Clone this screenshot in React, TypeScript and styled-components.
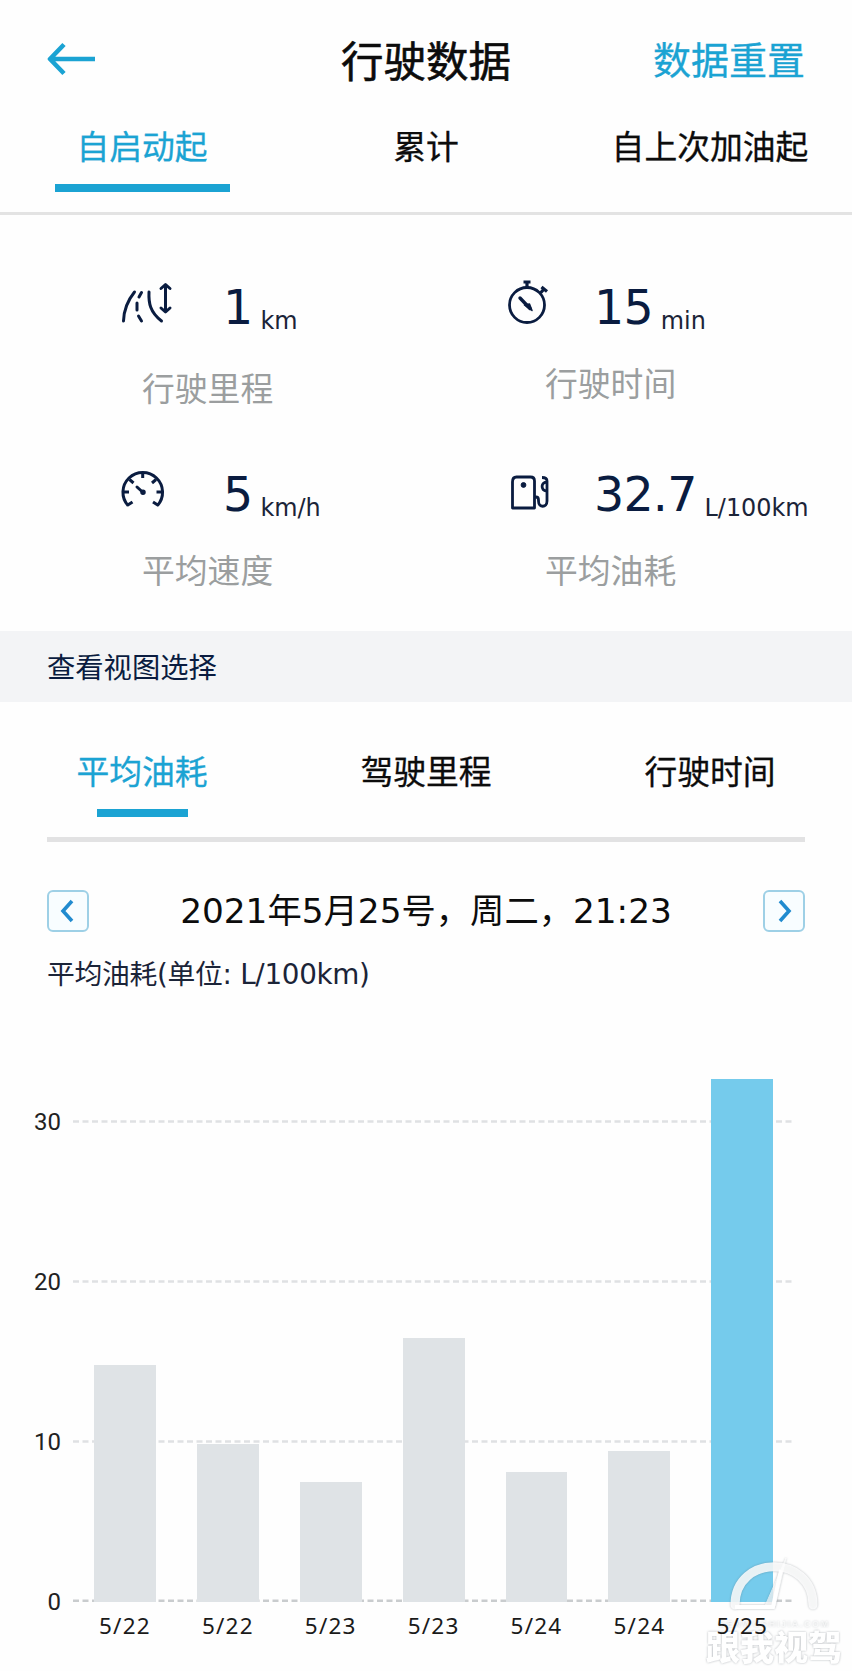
import React from 'react';
import styled, { createGlobalStyle } from 'styled-components';

const BLUE = '#1ba3d3';
const NAVY = '#0a1c40';
const WIDE = '"DejaVu Sans", "Noto Sans CJK SC", sans-serif';

const Global = createGlobalStyle`
  * { box-sizing: border-box; }
  body {
    margin: 0;
    background: #fefefe;
    font-family: "Noto Sans", "Noto Sans CJK SC", sans-serif;
    color: #0c0c0c;
  }
  button { font: inherit; color: inherit; background: none; border: 0; padding: 0; }
`;

const Screen = styled.main`
  position: relative;
  width: 852px;
  height: 1671px;
  overflow: hidden;
  display: flex;
  flex-direction: column;
`;

const Header = styled.header`
  height: 121px;
  padding: 0 47px;
  display: grid;
  grid-template-columns: 1fr auto 1fr;
  align-items: center;
`;

const BackButton = styled.button`
  display: flex;
  justify-self: start;
  margin-top: -3px;
`;

const Title = styled.h1`
  margin: 0;
  font-size: 42.5px;
  line-height: 50px;
  font-weight: 400;
  -webkit-text-stroke: 0.6px currentColor;
`;

const ResetButton = styled.button`
  justify-self: end;
  && { color: ${BLUE}; font-size: 38px; }
  line-height: 48px;
  margin-top: -3px;
  -webkit-text-stroke: 0.3px currentColor;
`;

const Tabs = styled.nav<{ $height: number }>`
  height: ${p => p.$height}px;
  display: grid;
  grid-template-columns: repeat(3, 284px);
`;

const PeriodTabs = styled(Tabs)`
  padding-top: 1px;
  border-bottom: 3px solid #e3e3e3;
`;

const Tab = styled.button<{ $active?: boolean; $bar: number; $gap: number }>`
  display: flex;
  flex-direction: column;
  align-items: center;
  && { font-size: 32.8px; color: ${p => (p.$active ? BLUE : '#0c0c0c')}; }
  line-height: 50px;
  white-space: nowrap;
  -webkit-text-stroke: 0.3px currentColor;
  &::after {
    content: "";
    width: ${p => p.$bar}px;
    height: 8px;
    margin-top: ${p => p.$gap}px;
    background: ${p => (p.$active ? BLUE : 'transparent')};
  }
`;

const Stats = styled.section`
  height: 416px;
  padding: 63px 0 0 119px;
  display: grid;
  grid-template-columns: 388px 1fr;
  grid-template-rows: 187px 187px;
`;

const Stat = styled.div`
  display: flex;
  flex-direction: column;
`;

const Reading = styled.div`
  display: grid;
  grid-template-columns: 87px 1fr;
  height: 68px;
`;

const Figure = styled.div`
  display: flex;
  align-items: baseline;
  color: ${NAVY};
  white-space: nowrap;
  font-family: ${WIDE};
`;

const Value = styled.span<{ $indent: number }>`
  padding-left: ${p => p.$indent}px;
  font-size: 47.5px;
  line-height: 60px;
  letter-spacing: -0.8px;
`;

const Unit = styled.span`
  margin-left: 8px;
  position: relative;
  top: 5px;
  font-size: 23.9px;
  color: #1b2438;
`;

const Caption = styled.div<{ $top: number; $left: number }>`
  margin: ${p => p.$top}px 0 0 ${p => p.$left}px;
  font-size: 32.8px;
  line-height: 48px;
  color: #9b9e9f;
`;

const SectionBar = styled.h2`
  margin: 0;
  height: 71px;
  padding: 1px 0 0 47px;
  background: #f3f4f6;
  color: ${NAVY};
  font-size: 28.3px;
  font-weight: 400;
  line-height: 71px;
`;

const MetricTabs = styled(Tabs)`
  padding-top: 45px;
`;

const Rule = styled.hr`
  width: 758px;
  height: 5px;
  margin: 0 47px;
  border: 0;
  background: #e2e2e3;
`;

const DateRow = styled.div`
  height: 42px;
  margin: 48px 47px 0;
  display: flex;
  justify-content: space-between;
  align-items: center;
`;

const StepButton = styled.button`
  && { border: 2px solid #9ed0e6; background: #f8fdff; }
  width: 42px;
  height: 42px;
  border-radius: 6px;
  display: flex;
  align-items: center;
  justify-content: center;
`;

const DateText = styled.div`
  font-family: ${WIDE};
  font-size: 34.3px;
  line-height: 42px;
  white-space: nowrap;
`;

const ChartTitle = styled.h3`
  margin: 22px 0 0 47px;
  height: 40px;
  font-family: ${WIDE};
  font-size: 27.8px;
  line-height: 42px;
  letter-spacing: -0.3px;
  font-weight: 400;
  color: #1b2438;
`;

const Chart = styled.section`
  margin-top: 84px;
  display: grid;
  grid-template-columns: 61px 721px;
  column-gap: 12px;
`;

const Axis = styled.div`
  height: 524px;
  display: flex;
  flex-direction: column;
  justify-content: flex-end;
  margin-bottom: -15px;
`;

const Tick = styled.span`
  height: 160px;
  flex: none;
  display: flex;
  align-items: flex-end;
  justify-content: flex-end;
  font: 24px/30px Roboto, sans-serif;
  color: #222;
  &:first-child { height: 30px; }
  &:last-child { margin-bottom: -15px; }
`;

const Plot = styled.div`
  display: grid;
  height: 524px;
`;

const Grid = styled.svg`
  grid-area: 1 / 1;
  display: block;
`;

const Bars = styled.div`
  grid-area: 1 / 1;
  display: flex;
  align-items: flex-end;
  gap: 41px;
  padding-left: 21px;
`;

const Bar = styled.div<{ $current?: boolean }>`
  width: 61.9px;
  flex: none;
  background: ${p => (p.$current ? '#75cbec' : '#dfe3e6')};
`;

const Days = styled.div`
  position: relative;
  z-index: 2;
  grid-column: 2;
  margin-top: 8px;
  padding-left: 21px;
  display: flex;
  gap: 41px;
`;

const Day = styled.span`
  width: 61.9px;
  display: flex;
  justify-content: center;
  font-size: 22.5px;
  line-height: 32px;
  letter-spacing: 1.2px;
  white-space: nowrap;
  color: #1a1a1a;
`;

const Watermark = styled.div`
  position: absolute;
  z-index: 1;
  left: 701px;
  top: 1556px;
  width: 146px;
  display: flex;
  flex-direction: column;
  align-items: center;
  color: #fff;
  filter: drop-shadow(0 0 1.2px rgba(70, 80, 90, 0.4));
`;

const Site = styled.span`
  font: 700 9px/12px "Liberation Sans", sans-serif;
  letter-spacing: 1.6px;
  white-space: nowrap;
  margin-top: 6px;
  opacity: 0.6;
`;

const Brand = styled.span`
  font: 900 34px/36px "Noto Sans CJK SC", sans-serif;
  white-space: nowrap;
  margin-top: -2px;
`;

const RoadIcon = () => (
  <svg width="54" height="46" viewBox="0 0 54 46" fill="none" stroke={NAVY} strokeWidth="3" strokeLinecap="round" strokeLinejoin="round">
    <path d="M15.500 14Q5 27 4.500 43" />
    <path d="M22.500 14.500L20 19M18 25V32M19.500 38L22.500 43" />
    <path d="M30 14C29.500 25 31 34 42.500 43" />
    <path d="M46.500 7.500V33M42 10.500L46.500 6.500L51 10.500M42 30L46.500 34L51 30" />
  </svg>
);

const TimerIcon = () => (
  <svg width="54" height="46" viewBox="0 0 54 46" fill="none" stroke={NAVY} strokeWidth="2.800">
    <circle cx="20" cy="27" r="17.500" />
    <path d="M20 9V4M16.500 4H23.500M33.500 15L37 11M34.500 9L40 13.500" strokeWidth="3.200" />
    <path d="M13 20L23 30.500" strokeWidth="3.400" strokeLinecap="round" />
    <path d="M17.500 27L20 29L25 32.500L22.500 26Z" fill={NAVY} strokeLinejoin="round" strokeWidth="1.500" />
  </svg>
);

const GaugeIcon = () => (
  <svg width="54" height="46" viewBox="0 0 54 46" fill="none" stroke={NAVY} strokeWidth="3">
    <path d="M9 40.500A19.800 19.800 0 1 1 38.500 40.500M8 40.500L13.500 37M39.500 40.500L34 37" strokeLinejoin="round" />
    <path d="M23.700 7V13M4 27H10M37.500 27H43.500M10.500 14.500L14.500 18M37 14.500L33 18" />
    <path d="M18 22L23.500 27" strokeLinecap="round" />
    <circle cx="24" cy="27.200" r="2" fill={NAVY} strokeWidth="1.500" />
  </svg>
);

const FuelIcon = () => (
  <svg width="54" height="46" viewBox="0 0 54 46" fill="none" stroke={NAVY} strokeWidth="2.800">
    <path d="M5.500 43V17Q5.500 12 9.500 12H23.500Q27.500 12 27.500 16V43Z" strokeLinejoin="round" />
    <circle cx="16.500" cy="20" r="2.400" fill={NAVY} strokeWidth="1" />
    <path d="M27.500 32H29Q31.500 32 31.500 35V36C31.500 43 40 43 40 36V16Q40 12.500 35 12.500M40 17C34 17 33 25 40 26.500" />
  </svg>
);

const stats = [
  { icon: <RoadIcon />, value: '1', unit: 'km', label: '行驶里程', indent: 17, left: 23, top: 19 },
  { icon: <TimerIcon />, value: '15', unit: 'min', label: '行驶时间', indent: 0, left: 38, top: 14 },
  { icon: <GaugeIcon />, value: '5', unit: 'km/h', label: '平均速度', indent: 17, left: 23, top: 14 },
  { icon: <FuelIcon />, value: '32.7', unit: 'L/100km', label: '平均油耗', indent: 0, left: 38, top: 14 },
];

const trips = [
  { day: '5/22', height: 237 },
  { day: '5/22', height: 158 },
  { day: '5/23', height: 120.5 },
  { day: '5/23', height: 264 },
  { day: '5/24', height: 130 },
  { day: '5/24', height: 151 },
  { day: '5/25', height: 523.5 },
];

export default function App() {
  return (
    <>
      <Global />
      <Screen>
        <Header>
          <BackButton aria-label="返回">
            <svg width="49" height="34" viewBox="0 0 49 34" fill="none" stroke={BLUE} strokeWidth="4.600">
              <path d="M48 17H3M17 2.500L3 17L17 31.500" strokeLinejoin="round" />
            </svg>
          </BackButton>
          <Title>行驶数据</Title>
          <ResetButton>数据重置</ResetButton>
        </Header>
        <PeriodTabs $height={94}>
          <Tab $active $bar={175} $gap={12}>自启动起</Tab>
          <Tab $bar={175} $gap={12}>累计</Tab>
          <Tab $bar={175} $gap={12}>自上次加油起</Tab>
        </PeriodTabs>
        <Stats>
          {stats.map(s => (
            <Stat key={s.label}>
              <Reading>
                {s.icon}
                <Figure>
                  <Value $indent={s.indent}>{s.value}</Value>
                  <Unit>{s.unit}</Unit>
                </Figure>
              </Reading>
              <Caption $top={s.top} $left={s.left}>{s.label}</Caption>
            </Stat>
          ))}
        </Stats>
        <SectionBar>查看视图选择</SectionBar>
        <MetricTabs $height={135}>
          <Tab $active $bar={91} $gap={12}>平均油耗</Tab>
          <Tab $bar={91} $gap={12}>驾驶里程</Tab>
          <Tab $bar={91} $gap={12}>行驶时间</Tab>
        </MetricTabs>
        <Rule />
        <DateRow>
          <StepButton aria-label="上一条">
            <svg width="22" height="24" viewBox="0 0 22 24" fill="none" stroke="#218bcf" strokeWidth="3.600">
              <path d="M15 2L6 12L15 22" />
            </svg>
          </StepButton>
          <DateText>2021年5月25号，周二，21:23</DateText>
          <StepButton aria-label="下一条">
            <svg width="22" height="24" viewBox="0 0 22 24" fill="none" stroke="#218bcf" strokeWidth="3.600">
              <path d="M7 2L16 12L7 22" />
            </svg>
          </StepButton>
        </DateRow>
        <ChartTitle>平均油耗(单位: L/100km)</ChartTitle>
        <Chart>
          <Axis>
            <Tick>30</Tick>
            <Tick>20</Tick>
            <Tick>10</Tick>
            <Tick>0</Tick>
          </Axis>
          <Plot>
            <Grid width="721" height="524" stroke="#dfe1e3" strokeWidth="2.500" strokeDasharray="6 3.500">
              <path d="M0 43.500H721M0 203.500H721M0 363.500H721" />
              <path d="M0 522.800H721" stroke="#c9ccce" />
            </Grid>
            <Bars>
              {trips.map((t, i) => (
                <Bar key={i} $current={i === trips.length - 1} style={{ height: t.height }} />
              ))}
            </Bars>
          </Plot>
          <Days>
            {trips.map((t, i) => (
              <Day key={i}>{t.day}</Day>
            ))}
          </Days>
        </Chart>
        <Watermark>
          <svg width="94" height="56" viewBox="0 0 94 56" fill="none" stroke="#fff">
            <path d="M8 49C8 -2 86 -2 86 49" strokeWidth="9" strokeLinecap="round" opacity="0.850" />
            <path d="M8 51H46L54 14" strokeWidth="4" />
            <path d="M38 50L59 2L48 50Z" fill="#fff" strokeWidth="1" opacity="0.700" />
          </svg>
          <Site>GENWOSHIJIA.COM</Site>
          <Brand>跟我视驾</Brand>
        </Watermark>
      </Screen>
    </>
  );
}
